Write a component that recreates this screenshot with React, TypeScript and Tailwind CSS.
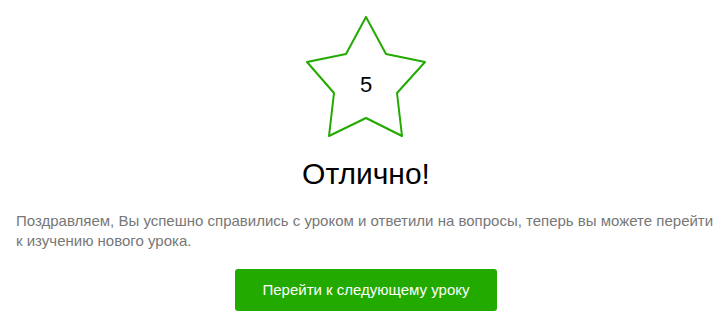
import React from "react";

export default function App() {
  return (
    <div className="w-[726px] h-[318px] bg-white overflow-hidden" style={{ fontFamily: '"Liberation Sans", Arial, sans-serif' }}>
      <div className="flex flex-col items-center pt-[16px] pl-[16px] pr-[10px]">
        <div className="relative w-[120px] h-[122px]">
          <svg width="120" height="122" viewBox="0 0 120 122" className="block">
            <polygon
              points="60,1 40,38 1,46 28,77 23,120 60,102 96,120 91,77 119,46 80,38"
              fill="none"
              stroke="#22aa00"
              strokeWidth="2"
              strokeLinejoin="round"
            />
          </svg>
          <div className="absolute inset-0 flex items-center justify-center pt-[14px] text-[22px] text-black">5</div>
        </div>
        <h1 className="mt-[19px] text-[30px] leading-[34px] text-black font-normal">Отлично!</h1>
        <p className="mt-[20px] self-stretch text-[15px] leading-[20px] text-[#777777]">
          Поздравляем, Вы успешно справились с уроком и ответили на вопросы, теперь вы можете перейти к изучению нового урока.
        </p>
        <button className="mt-[18px] w-[262px] h-[42px] rounded-[3px] bg-[#22aa00] text-white text-[15px]">
          Перейти к следующему уроку
        </button>
      </div>
    </div>
  );
}
